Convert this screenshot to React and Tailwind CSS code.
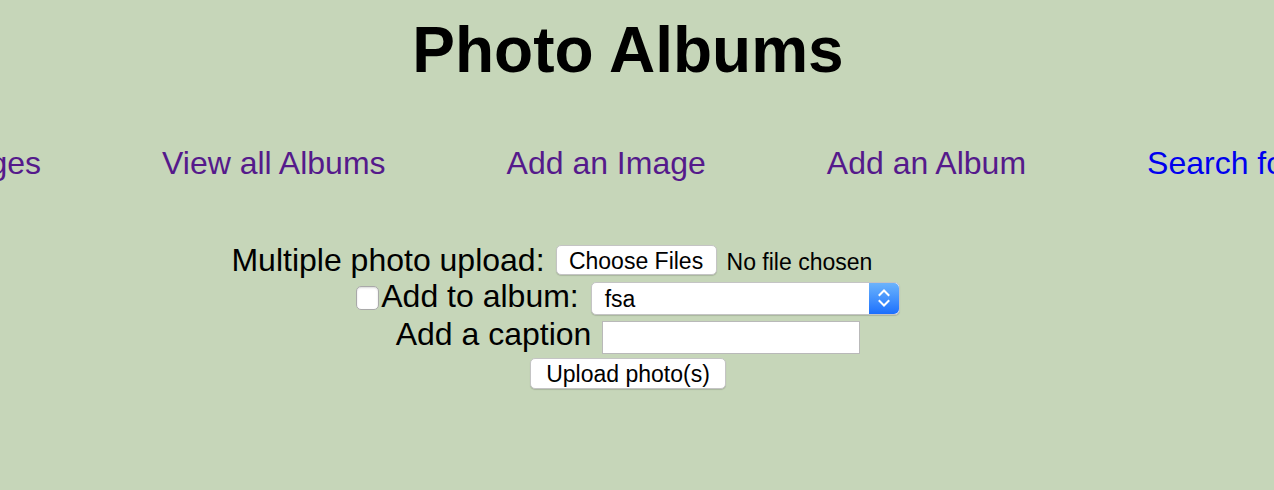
import React from "react";

const font = { fontFamily: '"Liberation Sans", Arial, Helvetica, sans-serif' };

function Chevrons() {
  return (
    <svg width="14" height="22" viewBox="0 0 14 22" fill="none" stroke="white" strokeWidth="2" strokeLinecap="square">
      <path d="M2.5 8 L7 3.5 L11.5 8" />
      <path d="M2.5 14 L7 18.5 L11.5 14" />
    </svg>
  );
}

export default function App() {
  const links = [
    { t: "View all Images", c: "text-[#551a8b]" },
    { t: "View all Albums", c: "text-[#551a8b]" },
    { t: "Add an Image", c: "text-[#551a8b]" },
    { t: "Add an Album", c: "text-[#551a8b]" },
    { t: "Search for Images", c: "text-[#0000ee]" },
  ];
  return (
    <div className="min-h-screen w-full overflow-hidden bg-[#c6d6b9] text-black" style={font}>
      <div className="w-[1256px] pb-[100px]">
        <h1 className="pt-[18px] text-center text-[64px] leading-[64px] font-bold">Photo Albums</h1>
        <nav className="mt-[65px] flex justify-center gap-[121px] pr-[30px] whitespace-nowrap text-[32px] leading-[32px]">
          {links.map((l) => (
            <a key={l.t} href="#" className={`shrink-0 ${l.c}`}>
              {l.t}
            </a>
          ))}
        </nav>
        <form className="mt-[63px] flex flex-col" onSubmit={(e) => e.preventDefault()}>
          <div className="flex h-[36px] items-center justify-center">
            <span className="text-[32px] leading-[32px] whitespace-nowrap">Multiple photo upload:</span>
            <div className="ml-[11px] flex w-[469px] items-center">
              <span className="flex h-[30px] w-[161px] items-center justify-center rounded-[5px] border border-[#c4c4c4] bg-white pt-[2px] text-[23px] leading-[23px] shadow-[0_1px_1px_rgba(0,0,0,0.15)]">
                Choose Files
              </span>
              <span className="ml-[10px] pt-[4px] text-[23px] leading-[23px] whitespace-nowrap">No file chosen</span>
            </div>
          </div>
          <div className="flex h-[40px] items-center justify-center">
            <span className="h-[24px] w-[23px] rounded-[5px] border border-[#a9a9a9] bg-white shadow-[inset_0_1px_2px_rgba(0,0,0,0.15)]" />
            <span className="mb-[4px] ml-[2px] text-[32px] leading-[32px] whitespace-nowrap">Add to album:</span>
            <div className="ml-[12px] flex h-[33px] w-[309px] items-stretch rounded-[5px] border border-[#c4c4c4] bg-white shadow-[0_1px_1px_rgba(0,0,0,0.15)]">
              <span className="flex flex-1 items-center pl-[13px] pt-[2px] text-[23px] leading-[23px]">fsa</span>
              <span className="flex w-[30px] items-center justify-center rounded-r-[5px] bg-gradient-to-b from-[#6cb3fb] to-[#1b6ffd]">
                <Chevrons />
              </span>
            </div>
          </div>
          <div className="flex h-[38px] items-center justify-center">
            <span className="mb-[6px] text-[32px] leading-[32px] whitespace-nowrap">Add a caption</span>
            <span className="ml-[11px] h-[33px] w-[258px] border border-[#b9b9b9] bg-white shadow-[inset_0_0_0_1px_white]" />
          </div>
          <div className="flex h-[35px] items-center justify-center">
            <span className="flex h-[31px] w-[196px] items-center justify-center rounded-[5px] border border-[#c4c4c4] bg-white pt-[2px] text-[23px] leading-[23px] shadow-[0_1px_1px_rgba(0,0,0,0.15)]">
              Upload photo(s)
            </span>
          </div>
        </form>
      </div>
    </div>
  );
}
